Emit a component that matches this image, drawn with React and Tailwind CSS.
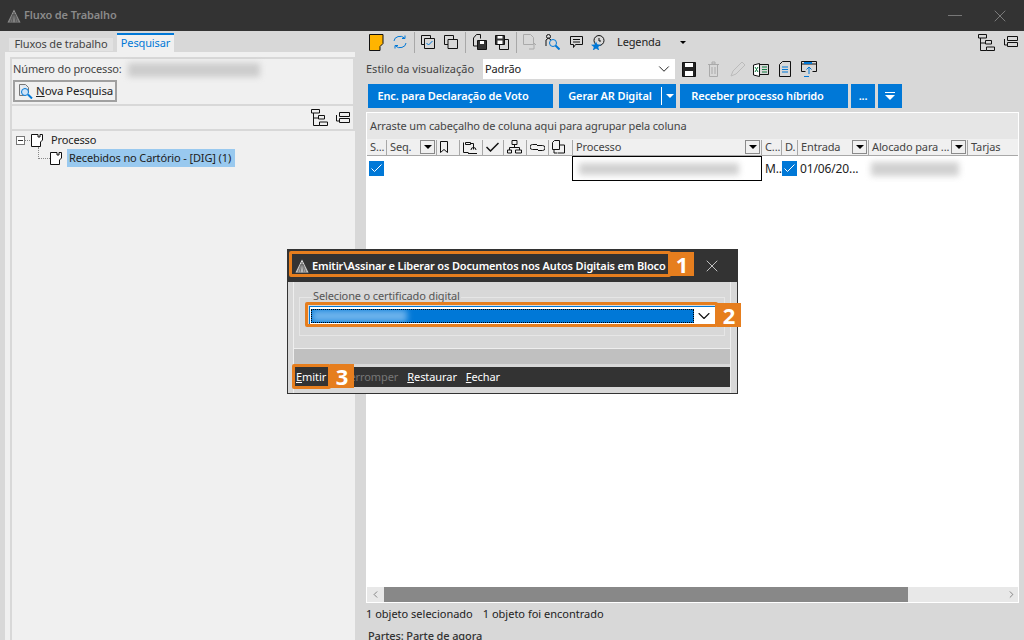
import { X, ChevronDown, ChevronLeft, ChevronRight } from "lucide-react";

const Svg = ({ w = 16, h = 16, children, className = "" }) => (
  <svg width={w} height={h} viewBox={`0 0 ${w} ${h}`} fill="none" stroke="#111" strokeWidth="1" className={`shrink-0 ${className}`}>
    {children}
  </svg>
);

const Logo = ({ color = "#9a9a9a" }) => (
  <svg width="14" height="14" viewBox="0 0 14 14" className="shrink-0">
    <path d="M7 0.500 L13.500 13.500 H.5 Z" fill={color} />
    <path d="M4.500 6 H9.500 M3.500 8 H10.500 M2.500 10 H11.500 M1.500 12 H12.500 M5 13.500 L7 3 L9 13.500 M3 13.500 L6 5 M11 13.500 L8 5" stroke="#333" strokeWidth="0.5" fill="none" />
  </svg>
);

const DocIcon = () => (
  <Svg w={12} h={13}>
    <path d="M.5.5H7V3H9V.5h2.500V6L9.500 8v4.500H.5z" fill="#fff" />
  </Svg>
);

const TreeIcon = () => (
  <Svg w={17} h={17}>
    <path d="M.5.500h8v3.500h-8zM2.500 4v12.500h6M2.500 9h5M7.500 6.500h6v3.500h-6zM8.500 13h8v3.500h-8z" />
  </Svg>
);

const RowsIcon = () => (
  <Svg w={14} h={12}>
    <path d="M3.500.500h10v4h-10zM.500 3v6h3M3.500 6.500h10v4h-10z" />
  </Svg>
);

const FilterBtn = () => (
  <span className="w-[15px] h-[14px] border border-[#8a8a8a] flex items-center justify-center shrink-0 bg-[#f0f0f0]">
    <span className="w-0 h-0 border-x-[4px] border-x-transparent border-t-[4px] border-t-black" />
  </span>
);

const Sep = () => <span className="w-px h-[21px] bg-[#a8a8a8] ml-[7px] shrink-0" />;

const Head = ({ w, label, filter, children }) => (
  <div style={{ width: w }} className="h-[15px] shrink-0 flex items-center justify-between border-r border-[#a8a8a8] pl-[3px] pr-[1px] overflow-hidden whitespace-nowrap">
    {label && <span>{label}</span>}
    {children}
    {filter && <FilterBtn />}
  </div>
);

const Check = ({ className = "" }) => (
  <span className={`w-[15px] h-[15px] bg-[#0078d7] flex items-center justify-center shrink-0 ${className}`}>
    <svg width="11" height="9" viewBox="0 0 11 9" fill="none" stroke="#fff" strokeWidth="1"><path d="M.5 4.500l3 3 7-7" /></svg>
  </span>
);

const BlueBtn = ({ w, className = "", children }) => (
  <div style={{ width: w }} className={`h-6 bg-[#0078d7] text-white font-semibold flex items-center justify-center shrink-0 ${className}`}>{children}</div>
);

const Blur = ({ className }) => <div className={`bg-[#bdbdbd] blur-[3px] opacity-70 ${className}`} />;

const Badge = ({ n, className }) => (
  <span className={`absolute w-6 h-6 bg-[#e67e1e] text-white text-[22px] font-bold flex items-center justify-center leading-none tracking-normal ${className}`}>{n}</span>
);

export default function App() {
  return (
    <div className="relative w-[1024px] h-[640px] overflow-hidden bg-[#d8d8d8] text-[11px] tracking-[-0.13px] text-[#222]" style={{ fontFamily: '"Noto Sans", sans-serif' }}>
      {/* title bar */}
      <div className="h-[31px] bg-[#333333] flex items-center pl-[7px] text-[#8f8f8f]">
        <Logo />
        <span className="ml-[3px] font-semibold text-[#8a8a8a]">Fluxo de Trabalho</span>
        <span className="ml-auto w-[14px] h-px bg-[#777]" />
        <X size={20} strokeWidth={1} color="#8a8a8a" className="ml-[28px] mr-[14px]" />
      </div>

      <div className="flex h-[609px]">
        {/* left */}
        <div className="w-[350px] ml-[5px] shrink-0 flex flex-col">
          <div className="h-[21px] flex items-end pl-[4px] gap-[4px]">
            <div className="h-[13px] mb-[1px] w-[104px] bg-[#e2e2e2] text-[#444] flex items-center justify-center">Fluxos de trabalho</div>
            <div className="h-[19px] w-[57px] border-t-2 border-[#0078d7] bg-[#f0f0f0] text-[#0078d7] flex items-center justify-center">Pesquisar</div>
          </div>
          <div className="flex-1 bg-[#f0f0f0] pl-[5px] pt-[5px] flex flex-col">
            <div className="h-[49px] border-2 border-[#d8d8d8] pl-[1px]">
              <div className="flex items-center h-[21px]">
                <span className="text-[#444]">Número do processo:</span>
                <Blur className="w-[132px] h-[14px] ml-[6px]" />
              </div>
              <div className="h-[22px] w-[104px] border-2 border-[#a0a0a0] flex items-center pl-[3px] gap-[3px] text-[11.5px] whitespace-nowrap">
                <Svg w={15} h={16}>
                  <path d="M1.500 1.500h6l3 3v5M1.500 1.500v11h5" stroke="#777" fill="#dfe8f2" />
                  <circle cx="7" cy="9" r="3.500" stroke="#0078d7" fill="#cfe3f7" />
                  <path d="M10 11.500l4 4" stroke="#0078d7" strokeWidth="2" />
                </Svg>
                <span><u>N</u>ova Pesquisa</span>
              </div>
            </div>
            <div className="h-[25px] border-x-2 border-b-2 border-[#d8d8d8] flex items-center justify-end gap-[8px] pr-[3px]">
              <TreeIcon />
              <RowsIcon />
            </div>
            <div className="pl-[4px] border-l-2 border-[#d8d8d8] flex-1">
              <div className="flex items-center h-[18px]">
                <span className="w-[9px] h-[9px] border border-[#777] flex items-center justify-center bg-white shrink-0">
                  <span className="w-[5px] h-px bg-[#333]" />
                </span>
                <span className="w-[5px] border-t border-dotted border-[#888] mr-px shrink-0" />
                <DocIcon />
                <span className="ml-[8px]">Processo</span>
              </div>
              <div className="flex items-center h-[18px] pl-[22px]">
                <span className="w-[12px] h-[12px] -mt-[10px] border-l border-b border-dotted border-[#888] shrink-0" />
                <DocIcon />
                <span className="ml-[5px] pl-[2px] w-[168px] shrink-0 h-[18px] bg-[#99c9ef] flex items-center whitespace-nowrap">Recebidos no Cartório - [DIG] (1)</span>
              </div>
            </div>
          </div>
        </div>

        {/* right */}
        <div className="ml-[5px] flex-1 flex flex-col pl-[6px] pr-[5px]">
          {/* toolbar */}
          <div className="h-[22px] flex items-center">
            <svg width="15" height="17" viewBox="0 0 15 17" className="ml-[3px] shrink-0">
              <path d="M.500.500h13.500v9l-3 3v4H.500z" fill="#ffb400" stroke="#111" />
            </svg>
            <svg width="14" height="14" viewBox="0 0 14 14" fill="none" stroke="#0078d7" className="ml-[9px] shrink-0">
              <path d="M1 6a6 5 0 0 1 10.500-3M13 8a6 5 0 0 1-10.500 3M12 .5v3H9M2 13.500v-3h3" />
            </svg>
            <Sep />
            <Svg className="ml-[6px]" w={14} h={14}>
              <path d="M.500.500h9v3M.500.500v9h3" />
              <path d="M3.500 3.500h10v10h-10z" />
              <path d="M5.500 8l2 2 4-4" stroke="#0078d7" />
            </Svg>
            <Svg className="ml-[9px]" w={14} h={14}><path d="M.500.500h9v3.500M.500.500v9h3.500M4 4.500h9.500v9H4z" /></Svg>
            <Sep />
            <Svg className="ml-[7px]" w={14} h={16}>
              <path d="M.500 4l3-3.500h4v4M.500 4v8h4" />
              <path d="M4.500 6.500h9v9h-9z" fill="#333" />
              <path d="M7 7h4v3H7z" fill="#fff" stroke="none" />
            </Svg>
            <Svg className="ml-[8px]" w={14} h={15}>
              <path d="M.500.500h9v9h-9z" fill="#333" />
              <path d="M2.500 1h5v2.500h-5zM2.500 5.500h5V9h-5z" fill="#fff" stroke="none" />
              <path d="M10 4.500h3.500v10H4.500V10" />
            </Svg>
            <Sep />
            <Svg className="ml-[6px]" w={14} h={16}>
              <path d="M.500.500h7l3 3v7h-10z" stroke="#aaa" />
              <path d="M11 9v6M9 11l2-2 2 2M6 15h5" stroke="#aaa" />
            </Svg>
            <Svg className="ml-[8px]" w={15} h={16}>
              <path d="M1 12V6l2.500-2L6 6" />
              <circle cx="3.500" cy="2.500" r="2" />
              <circle cx="8" cy="9" r="3.500" stroke="#0078d7" />
              <path d="M10.500 11.500l4 4" stroke="#0078d7" strokeWidth="2" />
            </Svg>
            <Svg className="ml-[10px]" w={13} h={13}><path d="M.500.500h12v8h-7l-2 3v-3h-3zM3 3.500h7M3 6h7" /></Svg>
            <Svg className="ml-[8px]" w={14} h={15}>
              <circle cx="8" cy="5.500" r="5" />
              <path d="M8 3v3h2" />
              <path d="M5 6.500l1.300 3 3.700.3-2.800 2.300 1 3.400-3.200-1.900-3.200 1.900 1-3.400L0 9.800l3.700-.3z" fill="#0078d7" stroke="none" />
            </Svg>
            <span className="ml-[12px] w-[63px]">Legenda</span>
            <span className="w-0 h-0 border-x-[3px] border-x-transparent border-t-[3px] border-t-black" />
            <div className="ml-auto flex items-center gap-[9px] pr-px">
              <TreeIcon />
              <RowsIcon />
            </div>
          </div>

          {/* view style */}
          <div className="h-[24px] mt-[4px] flex items-center">
            <span className="text-[#444] w-[110px] whitespace-nowrap tracking-normal">Estilo da visualização</span>
            <div className="ml-[7px] w-[192px] h-[20px] bg-white flex items-center justify-between pl-[2px] pr-[2px]">
              Padrão
              <ChevronDown size={18} strokeWidth={1.2} color="#111" />
            </div>
            <Svg className="ml-[7px]" w={14} h={15}>
              <path d="M.500.500h13v14H.500z" fill="#222" />
              <path d="M3 1h8v4H3zM3 9h8v5H3z" fill="#fff" stroke="none" />
            </Svg>
            <Svg className="ml-[11px]" w={13} h={16}>
              <path d="M2.500 3.500h8v12h-8zM1 3.500h11M5 1h3v2H5zM5 6v7M8 6v7" stroke="#aaa" />
            </Svg>
            <Svg className="ml-[10px]" w={16} h={16}>
              <path d="M1 15l2-5 9-9 3 3-9 9z" stroke="#bbb" />
            </Svg>
            <Svg className="ml-[7px]" w={16} h={15}>
              <path d="M6.500 1.500v13l-6-1.500V3z" fill="#fff" />
              <path d="M6.500 2.500h9v10h-9" />
              <path d="M2 5l3 5M5 5l-3 5M9 5h5M9 7.500h5M9 10h5" stroke="#107c41" />
            </Svg>
            <Svg className="ml-[10px]" w={12} h={16}>
              <path d="M3.500.500h8v15H.500V3.500z" />
              <path d="M3 6h6M3 8.500h6M3 11h6" stroke="#0078d7" />
            </Svg>
            <Svg className="ml-[10px]" w={16} h={16}>
              <path d="M.500.500h15v10h-4M.500.500v10h4M.500 3h15" />
              <path d="M3 2h8" stroke="#0078d7" strokeWidth="2" />
              <path d="M8 13V6M5.500 8.500L8 6l2.500 2.500M3 15.500h5" stroke="#0078d7" />
            </Svg>
          </div>

          {/* action buttons */}
          <div className="h-6 mt-[3px] flex items-center pl-[2px]">
            <BlueBtn w={185} className="pr-[15px]">Enc. para Declaração de Voto</BlueBtn>
            <div className="ml-[6px] h-6 w-[117px] bg-[#0078d7] text-white font-semibold flex items-center shrink-0">
              <span className="w-[102px] text-center">Gerar AR Digital</span>
              <span className="w-px h-[18px] bg-white" />
              <span className="ml-[4px] w-0 h-0 border-x-[4px] border-x-transparent border-t-[4px] border-t-white" />
            </div>
            <BlueBtn w={168} className="ml-[4px] pr-[13px]">Receber processo híbrido</BlueBtn>
            <BlueBtn w={24} className="ml-[3px]">...</BlueBtn>
            <div className="ml-[3px] w-6 h-6 bg-[#0078d7] flex flex-col items-center justify-center gap-[2px] shrink-0">
              <span className="w-[10px] h-px bg-white" />
              <span className="w-0 h-0 border-x-[5px] border-x-transparent border-t-[5px] border-t-white" />
            </div>
          </div>

          {/* grid */}
          <div className="mt-[4px] h-[491px] flex flex-col border border-white bg-white shrink-0 w-[653px]">
            <div className="h-[26px] bg-[#e6e6e6] flex items-center pl-[3px] text-[#444] shrink-0">Arraste um cabeçalho de coluna aqui para agrupar pela coluna</div>
            <div className="h-[17px] flex items-center bg-[#f0f0f0] border-b border-[#a8a8a8] text-[#444] shrink-0">
              <Head w={20} label="S..." />
              <Head w={50} label="Seq." filter />
              <Head w={23}><Svg w={9} h={12}><path d="M.500.500h7v11l-3.500-3-3.500 3z" /></Svg></Head>
              <Head w={23}>
                <Svg w={15} h={14}><path d="M2.500 2.500h5v2h-5zM.500 2.500v10h5M7.500 3.500h3v6M5 13.500h9M8 10a2 2 0 0 1 5 0" /></Svg>
              </Head>
              <Head w={21}><Svg w={13} h={10}><path d="M.500 5l4 4 8-8" strokeWidth="1.500" /></Svg></Head>
              <Head w={23}><Svg w={15} h={14}><path d="M5 .500h5v4H5zM7.500 4.500v3M2.500 10V7.500h10V10M.500 10h4v3h-4zM8.500 10h6v3h-6z" /></Svg></Head>
              <Head w={22}><Svg w={15} h={9}><path d="M7 1.500H2.500a2.500 2.500 0 0 0 0 5H8M7 2.500h5.500a2.500 2.500 0 0 1 0 5H8" /></Svg></Head>
              <Head w={24}><Svg w={13} h={14}><path d="M2.500.500h5v9h-7v-7zM7.500 5h5v8h-7M2 10v3h3" /></Svg></Head>
              <Head w={189} label="Processo" filter />
              <Head w={20} label="C..." />
              <Head w={16} label="D." />
              <Head w={71} label="Entrada" filter />
              <Head w={99} label="Alocado para ..." filter />
              <div className="pl-[3px]">Tarjas</div>
            </div>
            <div className="flex-1 bg-white min-h-0">
              <div className="h-[25px] flex items-center text-[12px]">
                <Check className="ml-[2px]" />
                <div className="ml-[188px] w-[190px] h-[25px] border border-black flex items-center pl-[6px] shrink-0">
                  <Blur className="w-[160px] h-[12px]" />
                </div>
                <span className="ml-[3px] w-[15px]">M..</span>
                <Check className="ml-[2px]" />
                <span className="ml-[3px] w-[68px] whitespace-nowrap">01/06/20...</span>
                <Blur className="w-[88px] h-[14px] ml-[3px]" />
              </div>
            </div>
            {/* scrollbar */}
            <div className="h-[15px] bg-[#e8e8e8] flex items-center shrink-0">
              <span className="w-[17px] flex justify-center shrink-0"><ChevronLeft size={11} strokeWidth={1.2} color="#333" /></span>
              <span className="w-[524px] h-[15px] bg-[#888888] shrink-0" />
              <span className="ml-auto w-[13px] flex justify-center"><ChevronRight size={11} strokeWidth={1.2} color="#333" /></span>
            </div>
          </div>
          <div className="h-[22px] pt-[3px] flex gap-[10px] whitespace-nowrap shrink-0 tracking-normal">
            <span>1 objeto selecionado</span>
            <span>1 objeto foi encontrado</span>
          </div>
          <div className="h-[15px] pt-[3px] pl-[2px] font-medium text-[#333] shrink-0 whitespace-nowrap">Partes: Parte de agora</div>
        </div>
      </div>

      {/* modal dialog */}
      <div className="absolute left-[287px] top-[249px] w-[451px] h-[145px] border border-[#333] bg-[#d8d8d8] flex flex-col">
        <div className="h-[32px] bg-[#333333] flex items-center pl-[7px] pr-[15px] shrink-0">
          <Logo color="#e4e4e4" />
          <span className="ml-[3px] text-white font-semibold whitespace-nowrap tracking-[-0.16px]">Emitir\Assinar e Liberar os Documentos nos Autos Digitais em Bloco</span>
          <X size={20} strokeWidth={1} color="#ddd" className="ml-auto" />
        </div>
        <div className="flex-1 ml-[5px] mr-[6px] border-x border-[#eeeeee] flex flex-col min-h-0">
          <div className="h-[67px] px-[5px] pt-[15px] shrink-0 border-b border-[#eeeeee]">
            <div className="relative h-[39px] border border-[#e6e6e6]">
              <span className="absolute -top-[9px] left-[12px] px-px bg-[#d8d8d8] text-[#555] leading-[14px]">Selecione o certificado digital</span>
              <div className="absolute left-[9px] right-[8px] top-[8px] h-[19px] bg-white border border-[#0078d7] flex items-center p-px">
                <div className="flex-1 h-[14px] bg-[#0078d7] border border-dotted border-black overflow-hidden">
                  <div className="w-[95px] h-full bg-[#6db3ec] blur-[3px]" />
                </div>
                <ChevronDown size={20} strokeWidth={1.3} color="#111" />
              </div>
            </div>
          </div>
          <div className="h-[15px] bg-[#c0c0c0] shrink-0" />
          <div className="mt-[3px] h-[20px] bg-[#333333] flex items-center pl-[2px] gap-[9px] text-white shrink-0 whitespace-nowrap tracking-[-0.08px]">
            <span><u>E</u>mitir</span>
            <span className="text-[#777]">Interromper</span>
            <span><u>R</u>estaurar</span>
            <span><u>F</u>echar</span>
          </div>
        </div>
      </div>

      {/* orange annotations */}
      <div className="absolute left-[289px] top-[251px] w-[382px] h-[26px] border-[3px] border-[#e67e1e] rounded-[2px]" />
      <Badge n="1" className="left-[670px] top-[252px]" />
      <div className="absolute left-[305px] top-[302px] w-[413px] h-[25px] border-[3px] border-[#e67e1e] rounded-[2px]" />
      <Badge n="2" className="left-[717px] top-[303px]" />
      <div className="absolute left-[292px] top-[364px] w-[39px] h-[25px] border-[3px] border-[#e67e1e] rounded-[2px]" />
      <Badge n="3" className="left-[330px] top-[364px]" />
    </div>
  );
}
